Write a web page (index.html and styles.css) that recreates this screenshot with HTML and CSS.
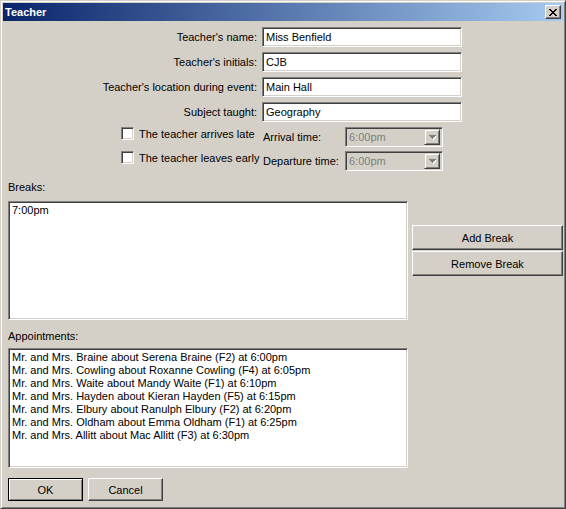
FILE: index.html
```html
<!DOCTYPE html>
<html lang="en">
<head>
    <meta charset="UTF-8">
    <meta name="viewport" content="width=device-width, initial-scale=1.0">
    <title>Teacher</title>
    <link rel="stylesheet" href="styles.css">
</head>
<body>
    <div class="window">
        <div class="titlebar">
            <span class="title">Teacher</span>
            <button class="close">
                <svg width="8" height="7" viewBox="0 0 8 7">
                    <path d="M0 0h2v1h-2zM6 0h2v1h-2zM1 1h2v1h-2zM5 1h2v1h-2zM2 2h4v1h-4zM3 3h2v1h-2zM2 4h4v1h-4zM1 5h2v1h-2zM5 5h2v1h-2zM0 6h2v1h-2zM6 6h2v1h-2z" fill="#000"/>
                </svg>
            </button>
        </div>
        <div class="content">
            <div class="fields">
                <label for="name">Teacher's name:</label>
                <input class="edit" id="name" type="text" value="Miss Benfield">
                <label for="initials">Teacher's initials:</label>
                <input class="edit" id="initials" type="text" value="CJB">
                <label for="location">Teacher's location during event:</label>
                <input class="edit" id="location" type="text" value="Main Hall">
                <label for="subject">Subject taught:</label>
                <input class="edit" id="subject" type="text" value="Geography">
            </div>

            <div class="options">
                <label class="check"><span class="box"></span>The teacher arrives late</label>
                <span class="opt-label">Arrival time:</span>
                <div class="combo">
                    <span class="combo-text">6:00pm</span>
                    <span class="drop">
                        <svg width="7" height="5" viewBox="0 0 7 5">
                            <path d="M1 1h7v1h-7zM2 2h5v1h-5zM3 3h3v1h-3zM4 4h1v1h-1z" fill="#fff"/>
                            <path d="M0 0h7v1h-7zM1 1h5v1h-5zM2 2h3v1h-3zM3 3h1v1h-1z" fill="#808080"/>
                        </svg>
                    </span>
                </div>
                <label class="check"><span class="box"></span>The teacher leaves early</label>
                <span class="opt-label">Departure time:</span>
                <div class="combo">
                    <span class="combo-text">6:00pm</span>
                    <span class="drop">
                        <svg width="7" height="5" viewBox="0 0 7 5">
                            <path d="M1 1h7v1h-7zM2 2h5v1h-5zM3 3h3v1h-3zM4 4h1v1h-1z" fill="#fff"/>
                            <path d="M0 0h7v1h-7zM1 1h5v1h-5zM2 2h3v1h-3zM3 3h1v1h-1z" fill="#808080"/>
                        </svg>
                    </span>
                </div>
            </div>

            <div class="caption">Breaks:</div>
            <div class="breaks-row">
                <div class="listbox breaks">
                    <div class="item">7:00pm</div>
                </div>
                <div class="side-buttons">
                    <button class="btn">Add Break</button>
                    <button class="btn">Remove Break</button>
                </div>
            </div>

            <div class="caption appt-caption">Appointments:</div>
            <div class="listbox appointments">
                <div class="item">Mr. and Mrs. Braine about Serena Braine (F2) at 6:00pm</div>
                <div class="item">Mr. and Mrs. Cowling about Roxanne Cowling (F4) at 6:05pm</div>
                <div class="item">Mr. and Mrs. Waite about Mandy Waite (F1) at 6:10pm</div>
                <div class="item">Mr. and Mrs. Hayden about Kieran Hayden (F5) at 6:15pm</div>
                <div class="item">Mr. and Mrs. Elbury about Ranulph Elbury (F2) at 6:20pm</div>
                <div class="item">Mr. and Mrs. Oldham about Emma Oldham (F1) at 6:25pm</div>
                <div class="item">Mr. and Mrs. Allitt about Mac Allitt (F3) at 6:30pm</div>
            </div>

            <div class="actions">
                <button class="btn default">OK</button>
                <button class="btn">Cancel</button>
            </div>
        </div>
    </div>
</body>
</html>
```

FILE: styles.css
```css
body {
    margin: 0;
    font-family: "Liberation Sans", Arial, sans-serif;
    font-size: 11px;
    color: #000;
}
.window {
    box-sizing: border-box;
    width: 566px;
    height: 509px;
    padding: 2px;
    background: #d4d0c8;
    border: 1px solid;
    border-color: #d4d0c8 #404040 #404040 #d4d0c8;
    box-shadow: inset 1px 1px #fff, inset -1px -1px #808080;
    display: flex;
    flex-direction: column;
}
.titlebar {
    height: 18px;
    display: flex;
    align-items: center;
    justify-content: space-between;
    padding: 0 2px;
    background: linear-gradient(to right, #0a246a, #a6caf0);
}
.title {
    color: #fff;
    font-weight: bold;
    font-size: 11px;
}
.close {
    box-sizing: border-box;
    width: 16px;
    height: 14px;
    padding: 0;
    display: flex;
    align-items: center;
    justify-content: center;
    background: #d4d0c8;
    border: 1px solid;
    border-color: #fff #404040 #404040 #fff;
    box-shadow: inset -1px -1px #808080;
}
.close svg {
    display: block;
}
.content {
    flex: 1;
    padding: 0 5px;
}
.fields {
    margin-top: 6px;
    display: grid;
    grid-template-columns: 249px 200px;
    grid-auto-rows: 20px;
    column-gap: 5px;
    row-gap: 5px;
    align-items: center;
}
.fields label {
    text-align: right;
    white-space: nowrap;
}
.edit {
    box-sizing: border-box;
    height: 20px;
    margin: 0;
    padding: 0 3px;
    font: inherit;
    color: #000;
    background: #fff;
    border: 1px solid;
    border-color: #808080 #fff #fff #808080;
    box-shadow: inset 1px 1px #404040, inset -1px -1px #d4d0c8;
    outline: none;
}
.options {
    margin: 5px 0 0 113px;
    display: grid;
    grid-template-columns: 142px 82px 98px;
    grid-auto-rows: 20px;
    row-gap: 4px;
}
.check {
    align-self: start;
    display: flex;
    align-items: center;
    gap: 5px;
    height: 13px;
    white-space: nowrap;
}
.box {
    flex: none;
    box-sizing: border-box;
    width: 13px;
    height: 13px;
    background: #fff;
    border: 1px solid;
    border-color: #808080 #fff #fff #808080;
    box-shadow: inset 1px 1px #404040, inset -1px -1px #d4d0c8;
}
.opt-label {
    align-self: center;
    white-space: nowrap;
}
.combo {
    box-sizing: border-box;
    height: 20px;
    display: flex;
    align-items: center;
    justify-content: space-between;
    padding: 2px;
    border: 1px solid;
    border-color: #808080 #fff #fff #808080;
    box-shadow: inset 1px 1px #404040, inset -1px -1px #d4d0c8;
}
.combo-text {
    color: #808080;
    padding-left: 1px;
}
.drop {
    box-sizing: border-box;
    width: 16px;
    height: 16px;
    display: flex;
    align-items: center;
    justify-content: center;
    background: #d4d0c8;
    border: 1px solid;
    border-color: #d4d0c8 #404040 #404040 #d4d0c8;
    box-shadow: inset 1px 1px #fff, inset -1px -1px #808080;
}
.caption {
    margin-top: 10px;
    line-height: 13px;
}
.breaks-row {
    margin-top: 7px;
    display: flex;
    align-items: flex-start;
}
.listbox {
    flex: none;
    box-sizing: border-box;
    width: 400px;
    background: #fff;
    padding: 2px 3px;
    border: 1px solid;
    border-color: #808080 #fff #fff #808080;
    box-shadow: inset 1px 1px #404040, inset -1px -1px #d4d0c8;
}
.breaks {
    height: 119px;
}
.appointments {
    margin-top: 5px;
    height: 120px;
}
.item {
    line-height: 13px;
    white-space: nowrap;
}
.side-buttons {
    flex: none;
    width: 151px;
    margin: 24px 0 0 4px;
    display: flex;
    flex-direction: column;
    gap: 1px;
}
.btn {
    box-sizing: border-box;
    height: 25px;
    padding: 0;
    font: inherit;
    color: #000;
    background: #d4d0c8;
    border: 1px solid;
    border-color: #fff #404040 #404040 #fff;
    box-shadow: inset -1px -1px #808080;
}
.actions {
    margin-top: 10px;
    display: flex;
    gap: 5px;
}
.actions .btn {
    width: 75px;
    height: 23px;
}
.actions .default {
    border-color: #000;
    box-shadow: inset 1px 1px #fff, inset -1px -1px #808080;
}
```
